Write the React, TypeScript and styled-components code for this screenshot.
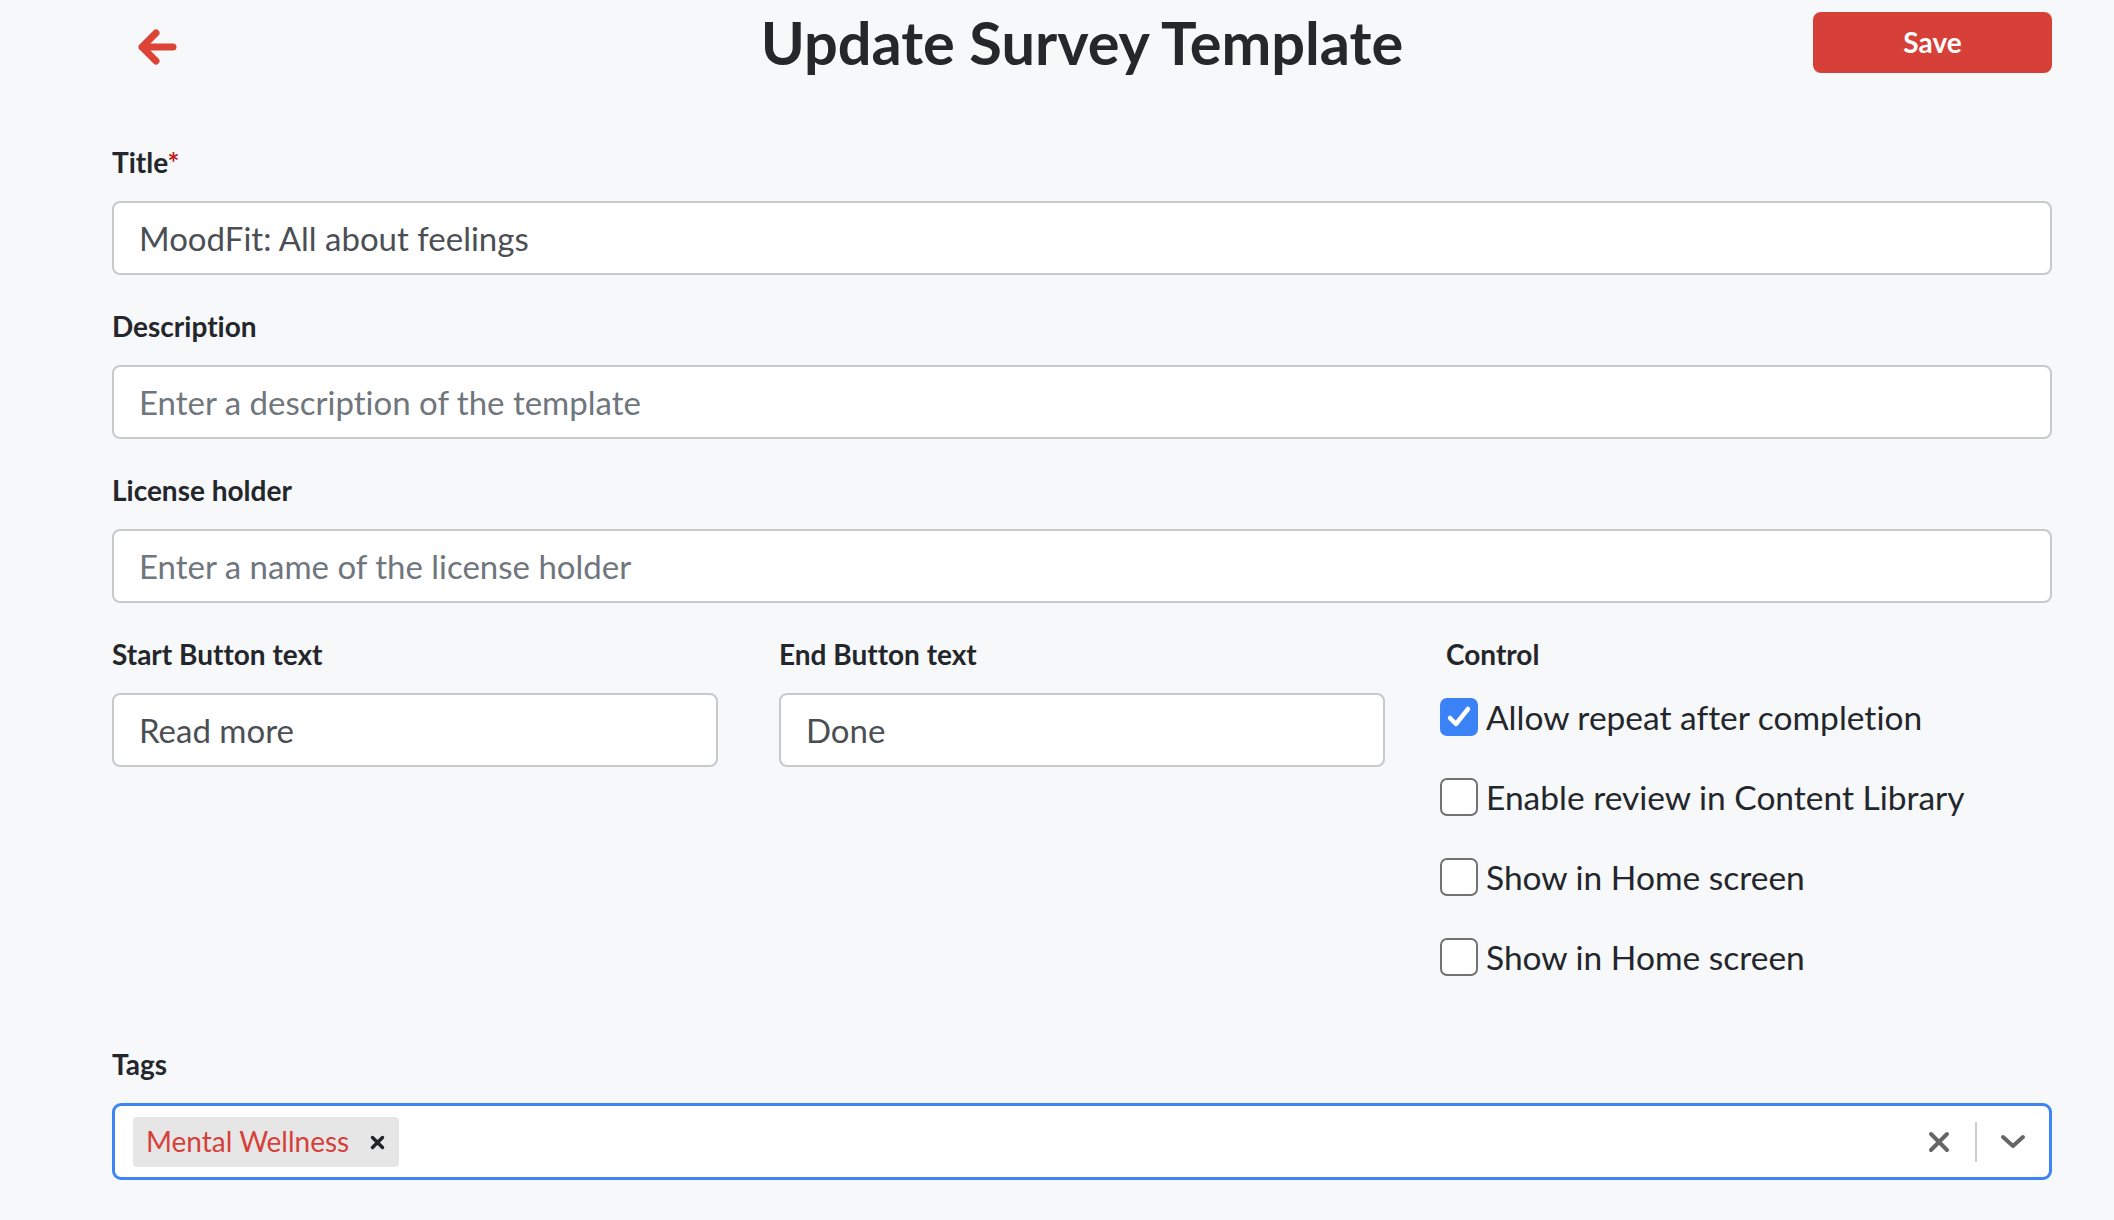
import React from "react";
import styled, { createGlobalStyle } from "styled-components";

const GlobalStyle = createGlobalStyle`
  html, body { margin: 0; padding: 0; background: #f7f8fa; }
  body {
    font-family: Lato, "Noto Sans", sans-serif;
    color: #23262b;
    font-variant-ligatures: none;
  }
  input, button { font-variant-ligatures: none; }
  * { box-sizing: border-box; }
`;

const Page = styled.div`
  width: 2114px;
  min-height: 1220px;
  padding: 0 62px 0 112px;
`;

const Header = styled.header`
  height: 86px;
  display: grid;
  grid-template-columns: 1fr auto 1fr;
  align-items: center;
`;

const BackButton = styled.button`
  justify-self: start;
  margin-left: 25px;
  margin-top: 8px;
  padding: 0;
  border: none;
  background: transparent;
  display: flex;
  cursor: pointer;
`;

const PageTitle = styled.h1`
  margin: 0;
  font-size: 59.5px;
  font-weight: 700;
  color: #25272b;
  letter-spacing: 0;
  line-height: 1;
`;

const SaveButton = styled.button`
  justify-self: end;
  width: 239px;
  height: 61px;
  margin-top: -2px;
  border: none;
  border-radius: 8px;
  background: #d64038;
  color: #ffffff;
  font-family: Lato, sans-serif;
  font-size: 28px;
  font-weight: 700;
  cursor: pointer;
`;

const Form = styled.form`
  display: flex;
  flex-direction: column;
  gap: 33px;
  padding-top: 58px;
`;

const Field = styled.div`
  display: flex;
  flex-direction: column;
  gap: 21px;
`;

const Label = styled.label`
  font-size: 28px;
  line-height: 36px;
  font-weight: 700;
  color: #23262b;
`;

const Required = styled.span`
  color: #c0201a;
`;

const TextInput = styled.input`
  width: 100%;
  height: 74px;
  padding: 0 25px;
  border: 2px solid #c8c9cb;
  border-radius: 8px;
  background: #ffffff;
  font-family: Lato, sans-serif;
  font-size: 33px;
  color: #4b4f55;
  outline: none;
  &::placeholder { color: #6f767d; opacity: 1; }
`;

const Row = styled.div`
  display: grid;
  grid-template-columns: repeat(3, 1fr);
  column-gap: 61px;
`;

const CheckList = styled.div`
  display: flex;
  flex-direction: column;
  gap: 32px;
  padding-bottom: 32px;
  margin-left: -6px;
`;

const CheckRow = styled.label`
  height: 48px;
  display: flex;
  align-items: center;
  gap: 8px;
  font-size: 33.5px;
  color: #23262b;
  cursor: pointer;
`;

const Box = styled.span<{ $checked?: boolean }>`
  width: 38px;
  height: 38px;
  flex: none;
  border-radius: 7px;
  display: flex;
  align-items: center;
  justify-content: center;
  background: ${(p) => (p.$checked ? "#3b82f6" : "#ffffff")};
  border: ${(p) => (p.$checked ? "none" : "2.5px solid #727272")};
`;

const Select = styled.div`
  height: 77px;
  display: flex;
  align-items: center;
  padding: 0 0 0 18px;
  border: 3px solid #3d85f5;
  border-radius: 9px;
  background: #ffffff;
`;

const Values = styled.div`
  flex: 1;
  display: flex;
  align-items: center;
`;

const Chip = styled.div`
  height: 50px;
  display: flex;
  align-items: center;
  gap: 21px;
  padding: 0 14px 2px 13px;
  background: #e6e6e6;
  border-radius: 4px;
  font-size: 28px;
  color: #d64038;
`;

const ChipRemove = styled.span`
  display: flex;
  align-items: center;
  margin-top: 3px;
`;

const Indicators = styled.div`
  display: flex;
  align-items: center;
  height: 100%;
`;

const IndicatorButton = styled.span`
  width: 72px;
  display: flex;
  align-items: center;
  justify-content: center;
`;

const Separator = styled.span`
  width: 2px;
  height: 40px;
  background: #cccccc;
`;

const ArrowLeft = () => (
  <svg width="40" height="38" viewBox="0 0 40 38" fill="none">
    <path d="M5 19H36M19 5L5 19L19 33" stroke="#db4437" strokeWidth="7" strokeLinecap="round" strokeLinejoin="round" />
  </svg>
);

const Check = () => (
  <svg width="26" height="26" viewBox="0 0 26 26" fill="none">
    <path d="M4 14L10 20L22 5" stroke="#ffffff" strokeWidth="4.5" strokeLinecap="round" strokeLinejoin="round" />
  </svg>
);

const SmallX = () => (
  <svg width="15" height="15" viewBox="0 0 15 15" fill="none">
    <path d="M2.5 2.5L12.5 12.5M12.5 2.5L2.5 12.5" stroke="#222428" strokeWidth="3.5" strokeLinecap="round" />
  </svg>
);

const ClearX = () => (
  <svg width="22" height="22" viewBox="0 0 22 22" fill="none">
    <path d="M3 3L19 19M19 3L3 19" stroke="#666666" strokeWidth="4" strokeLinecap="round" />
  </svg>
);

const Chevron = () => (
  <svg width="26" height="16" viewBox="0 0 26 16" fill="none">
    <path d="M3 3L13 12L23 3" stroke="#666666" strokeWidth="4" strokeLinecap="round" strokeLinejoin="round" />
  </svg>
);

const controls = [
  { label: "Allow repeat after completion", checked: true },
  { label: "Enable review in Content Library", checked: false },
  { label: "Show in Home screen", checked: false },
  { label: "Show in Home screen", checked: false },
];

export default function App() {
  return (
    <>
      <GlobalStyle />
      <Page>
        <Header>
          <BackButton aria-label="Back">
            <ArrowLeft />
          </BackButton>
          <PageTitle>Update Survey Template</PageTitle>
          <SaveButton>Save</SaveButton>
        </Header>
        <Form onSubmit={(e) => e.preventDefault()}>
          <Field>
            <Label>
              Title<Required>*</Required>
            </Label>
            <TextInput defaultValue="MoodFit: All about feelings" />
          </Field>
          <Field>
            <Label>Description</Label>
            <TextInput placeholder="Enter a description of the template" />
          </Field>
          <Field>
            <Label>License holder</Label>
            <TextInput placeholder="Enter a name of the license holder" />
          </Field>
          <Row>
            <Field>
              <Label>Start Button text</Label>
              <TextInput defaultValue="Read more" />
            </Field>
            <Field>
              <Label>End Button text</Label>
              <TextInput defaultValue="Done" />
            </Field>
            <Field>
              <Label>Control</Label>
              <CheckList>
                {controls.map((c, i) => (
                  <CheckRow key={i}>
                    <Box $checked={c.checked}>{c.checked && <Check />}</Box>
                    {c.label}
                  </CheckRow>
                ))}
              </CheckList>
            </Field>
          </Row>
          <Field>
            <Label>Tags</Label>
            <Select>
              <Values>
                <Chip>
                  Mental Wellness
                  <ChipRemove>
                    <SmallX />
                  </ChipRemove>
                </Chip>
              </Values>
              <Indicators>
                <IndicatorButton>
                  <ClearX />
                </IndicatorButton>
                <Separator />
                <IndicatorButton>
                  <Chevron />
                </IndicatorButton>
              </Indicators>
            </Select>
          </Field>
        </Form>
      </Page>
    </>
  );
}
